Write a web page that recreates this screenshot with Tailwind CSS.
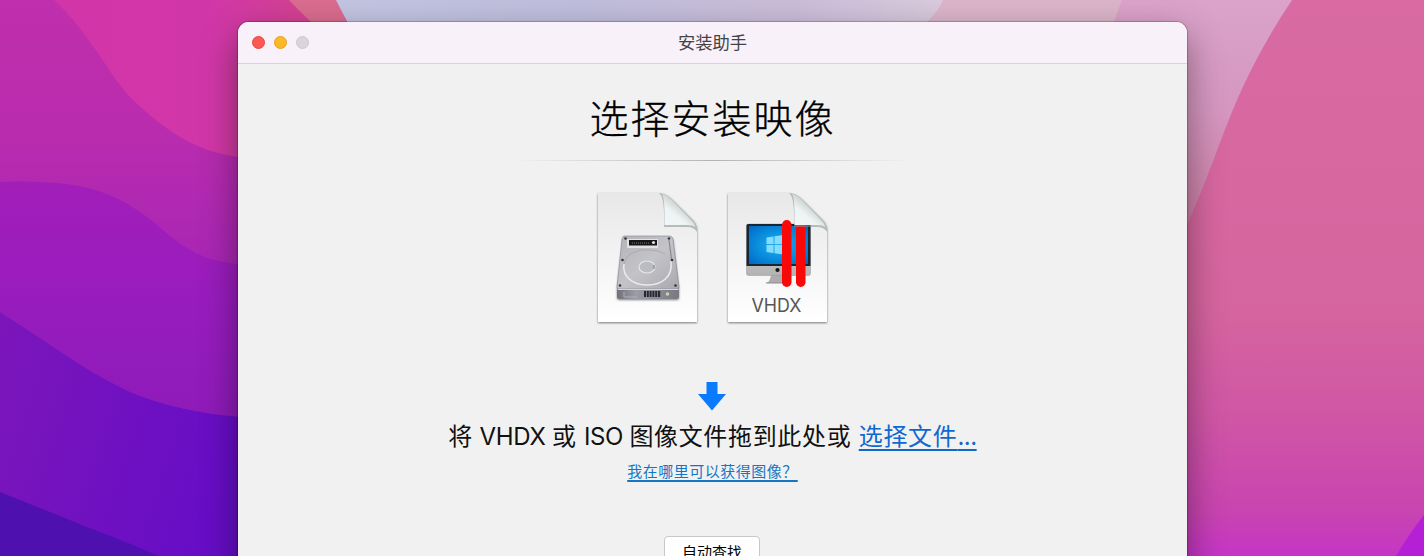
<!DOCTYPE html>
<html lang="zh-CN">
<head>
    <meta charset="UTF-8">
    <title>安装助手</title>
    <script src="https://cdn.jsdelivr.net/npm/@tailwindcss/browser@4"></script>
</head>
<body class="relative h-[556px] overflow-hidden bg-[#d4659f] font-['Inter','Noto_Sans_CJK_SC',sans-serif]">
    <!-- Wallpaper -->
    <svg class="absolute inset-0" width="1424" height="556" viewBox="0 0 1424 556">
        <defs>
            <linearGradient id="w1" gradientUnits="userSpaceOnUse" x1="0" y1="0" x2="0" y2="265"><stop offset="0" stop-color="#c02fac"/><stop offset=".5" stop-color="#b92cae"/><stop offset="1" stop-color="#a826b4"/></linearGradient>
            <linearGradient id="w2" x1="0" y1="0" x2="1" y2="0"><stop offset="0" stop-color="#d335a8"/><stop offset=".55" stop-color="#d136a9"/><stop offset="1" stop-color="#d4458c"/></linearGradient>
            <linearGradient id="w3" x1="0" y1="0" x2="0" y2="1"><stop offset="0" stop-color="#a21eb9"/><stop offset=".45" stop-color="#981cbd"/><stop offset="1" stop-color="#8b1bb8"/></linearGradient>
            <linearGradient id="w4" x1="0" y1="0" x2="1" y2=".3"><stop offset="0" stop-color="#7c16ba"/><stop offset="1" stop-color="#660dc6"/></linearGradient>
            <linearGradient id="w5" gradientUnits="userSpaceOnUse" x1="330" y1="0" x2="950" y2="0"><stop offset="0" stop-color="#c3c5e2"/><stop offset=".4" stop-color="#bfbedd"/><stop offset=".75" stop-color="#cbbdd9"/><stop offset="1" stop-color="#dacbdd"/></linearGradient>
            <linearGradient id="w6" x1="0" y1="0" x2="0" y2="1"><stop offset="0" stop-color="#dba3ca"/><stop offset=".45" stop-color="#d596bf"/><stop offset="1" stop-color="#cb799f"/></linearGradient>
            <linearGradient id="w7" x1="0" y1="0" x2="0" y2="1"><stop offset="0" stop-color="#d86ba1"/><stop offset=".55" stop-color="#d5659e"/><stop offset=".75" stop-color="#d056a5"/><stop offset=".92" stop-color="#c844b0"/><stop offset="1" stop-color="#c535c6"/></linearGradient>
        </defs>
        <rect width="420" height="556" fill="url(#w1)"/>
        <path d="M54 0C92 35 108 75 133 100C168 133 198 152 240 157L260 159V22H330V0Z" fill="url(#w2)"/>
        <path d="M289 0H338L350 30H320Q302 14 289 0Z" fill="#da6c90"/>
        <path d="M336 0H960V40H355Q347 20 336 0Z" fill="url(#w5)"/>
        <path d="M943 0H1130V40H905Q936 18 943 0Z" fill="#dcb5ca"/>
        <path d="M1122 0H1300V250H1170V40H1108Q1114 20 1122 0Z" fill="url(#w6)"/>
        <path d="M0 182C85 179 115 192 155 223C184 249 202 261 240 264L260 266V450H0Z" fill="url(#w3)"/>
        <path d="M0 312C70 357 90 374 135 394Q180 412 240 417L260 418V556H0Z" fill="url(#w4)"/>
        <path d="M0 492L92 529Q132 544 158 556H0Z" fill="#4f10b0"/>
        <path d="M1292 0C1226 99 1222 153 1180 240V556H1424V0Z" fill="url(#w7)"/>
        <path d="M1424 515Q1409 534 1396 556H1424Z" fill="#b51fd6"/>
    </svg>

    <!-- Installer window -->
    <main class="relative mx-auto mt-[22px] h-[640px] w-[949px] left-[0.5px] rounded-[11px] bg-[#f1f1f1] shadow-[0_0_1px_1px_rgba(0,0,0,0.22),0_14px_36px_rgba(0,0,0,0.42)]">
        <header class="relative flex h-[42px] items-center justify-center rounded-t-[11px] border-b border-[#d8d3da] bg-[#f8f1f9]">
            <div class="absolute left-[14px] flex gap-[9px]">
                <span class="size-[13px] rounded-full border border-[#e2463f] bg-[#fb5a50]"></span>
                <span class="size-[13px] rounded-full border border-[#e5a11d] bg-[#fbb927]"></span>
                <span class="size-[13px] rounded-full border border-[#cdc7cf] bg-[#dad4dc]"></span>
            </div>
            <h1 class="text-[17.3px] leading-[42px] text-[#454247]">安装助手</h1>
        </header>

        <section class="flex flex-col items-center text-[#111]">
            <h2 class="mt-[26px] h-[58px] whitespace-nowrap text-[39px] leading-[58px] font-light tracking-[2px] text-black [-webkit-text-stroke:0.3px_black]">选择安装映像</h2>
            <div class="mt-[12px] h-px w-[400px] bg-linear-to-r from-transparent via-[#b4b4b4] to-transparent"></div>

            <div class="mt-[27px] flex gap-[20px]">
                <!-- Disk image file -->
                <svg width="110" height="142" viewBox="0 0 110 142">
                    <defs>
                        <linearGradient id="page" x1="0" y1="0" x2="0" y2="1"><stop offset="0" stop-color="#e8e8e8"/><stop offset=".5" stop-color="#f3f3f3"/><stop offset="1" stop-color="#fff"/></linearGradient>
                        <linearGradient id="fold" x1=".1" y1="1" x2=".6" y2=".4"><stop offset="0" stop-color="#f2f8f8"/><stop offset=".6" stop-color="#eef3f3"/><stop offset="1" stop-color="#cdd2d2"/></linearGradient>
                        <linearGradient id="metal" x1="0" y1="0" x2="1" y2="1"><stop offset="0" stop-color="#b3b3b8"/><stop offset=".5" stop-color="#c3c3c8"/><stop offset="1" stop-color="#a8a8ae"/></linearGradient>
                        <linearGradient id="front" x1="0" y1="0" x2="1" y2="0"><stop offset="0" stop-color="#6f7079"/><stop offset=".3" stop-color="#9b9ca6"/><stop offset="1" stop-color="#777881"/></linearGradient>
                        <filter id="soft" x="-10%" y="-10%" width="120%" height="120%"><feDropShadow dx="0" dy="1" stdDeviation="1" flood-color="#000" flood-opacity=".5"/></filter>
                    </defs>
                    <path d="M5 5H65Q73 5 80 12L101 33Q104 36 104 43V134H5Z" fill="url(#page)" filter="url(#soft)"/>
                    <path d="M66 5Q72 9 71 39H94Q101 39 104 44Q105 37 100 32L80 12Q73 5 66 5Z" fill="#8d9191" opacity=".55"/>
                    <path d="M69 6Q72 10 71.500 37H94Q100 37 102 39Q102 36 98 32L79 12Q74 7 69 6Z" fill="url(#fold)"/>
                    <path d="M31 49H77Q79 49 80 51L86 100V109Q86 111 84 111H26Q24 111 24 109V100L30 51Z" fill="url(#front)" filter="url(#soft)"/>
                    <path d="M31 48H77Q79 48 80 51L86 99Q86 101 84 101H26Q24 101 24 99L29 51Q30 48 31 48Z" fill="url(#metal)" stroke="#91929a" stroke-width=".7"/>
                    <path d="M34 51H65V60H34Z" fill="#e2e2e4"/>
                    <path d="M36 52H64V57.500H36Z" fill="#171717"/>
                    <path d="M39 55H57" stroke="#777" stroke-dasharray="1 1"/><circle cx="60.500" cy="54.500" r="1.600" fill="#ddd"/>
                    <path d="M31 76C29 88 39 97 54 97S80 89 78 73" fill="none" stroke="#ededf0" stroke-width="1.4"/>
                    <path d="M31 76C33 66 43 61 57 62Q66 62 72 66" fill="none" stroke="#a4a5ab" stroke-width=".8"/>
                    <path d="M76 52L78.500 71" stroke="#888990" stroke-width="1.2"/>
                    <ellipse cx="54" cy="79" rx="8" ry="6" fill="#bbbcc2" stroke="#e6e6e8" stroke-width="1.2"/>
                    <path d="M61 77V81" stroke="#77777d"/>
                    <g fill="#35363a"><circle cx="32.500" cy="50.500" r="1.3"/><circle cx="76" cy="50.500" r="1.3"/><circle cx="29.500" cy="72" r="1.3"/><circle cx="79" cy="72" r="1.3"/><circle cx="27" cy="97.500" r="1.3"/><circle cx="82.500" cy="97.500" r="1.3"/></g>
                    <path d="M24.500 101.500H85.500" stroke="#d4d4dc"/>
                    <path d="M51 106H68" stroke="#282930" stroke-width="6" stroke-dasharray="2 .8"/>
                    <path d="M31 104V109H44" fill="none" stroke="#aeb0b9"/><circle cx="74.500" cy="106" r="1.8" fill="#d2cdaa"/>
                </svg>
                <!-- VHDX file -->
                <svg width="110" height="142" viewBox="0 0 110 142">
                    <defs>
                        <radialGradient id="screen" cx=".5" cy=".5" r=".7"><stop offset="0" stop-color="#2fb2f0"/><stop offset=".45" stop-color="#0c93e0"/><stop offset="1" stop-color="#0068c6"/></radialGradient>
                        <linearGradient id="chin" x1="0" y1="0" x2="0" y2="1"><stop offset="0" stop-color="#dedede"/><stop offset="1" stop-color="#b2b2b2"/></linearGradient>
                    </defs>
                    <path d="M5 5H65Q73 5 80 12L101 33Q104 36 104 43V134H5Z" fill="url(#page)" filter="url(#soft)"/>
                    <path d="M48 87H63L66 95H43Q47 94 48 87Z" fill="#adadb0"/><path d="M43 95H68" stroke="#8b8b8b"/>
                    <rect x="23.500" y="36" width="64" height="51.500" rx="2" fill="url(#chin)" stroke="#999" stroke-width=".5"/>
                    <path d="M23.500 78V37.500Q23.500 36 25 36H86Q87.500 36 87.500 37.500V78Z" fill="#1b2530"/>
                    <rect x="26" y="38" width="59" height="38" fill="url(#screen)"/>
                    <path d="M43.500 49.500L50.500 48.500V56H43.500ZM51.500 48.300L61 47V56H51.500ZM43.500 57H50.500V65L43.500 64ZM51.500 57H61V66.500L51.500 65.200Z" fill="#83ddff"/>
                    <circle cx="54.500" cy="82" r="2.100" fill="#151515"/>
                    <rect x="59" y="32" width="9.500" height="67" rx="4.700" fill="#f90808"/>
                    <rect x="73" y="32" width="9.500" height="67" rx="4.700" fill="#f90808"/>
                    <path d="M66 5Q72 9 71 39H94Q101 39 104 44Q105 37 100 32L80 12Q73 5 66 5Z" fill="#8d9191" opacity=".55"/>
                    <path d="M69 6Q72 10 71.500 37H94Q100 37 102 39Q102 36 98 32L79 12Q74 7 69 6Z" fill="url(#fold)"/>
                    <text x="28.500" y="123.500" textLength="50" lengthAdjust="spacingAndGlyphs" font-family="Inter" font-size="18.500" fill="#555">VHDX</text>
                </svg>
            </div>

            <svg class="relative -left-[0.5px] mt-[52px]" width="28" height="29" viewBox="0 0 28 29"><path d="M8.500 0H19.500V12H28L14 28.500L0 12H8.500Z" fill="#0a7aff"/></svg>

            <p class="mt-[8px] flex h-[36px] whitespace-pre text-[24px] leading-[36px] tracking-[0.66px]"><span class="[word-spacing:-1px]">将 </span><span class="tracking-[-0.3px]">VHDX </span><span>或 </span><span class="tracking-[-0.4px]">ISO </span><span>图像文件拖到此处或 </span><a href="#" class="text-[#1068cf] underline decoration-[1.5px] underline-offset-[4px]">选择文件<span class="tracking-[-0.5px]">...</span></a></p>
            <a href="#" class="mt-[5px] h-[24px] whitespace-pre text-[15px] leading-[24px] tracking-[0.5px] text-[#1477c5] underline decoration-[1.5px] underline-offset-[3px]">我在哪里可以获得图像？</a>
            <button class="relative -left-[0.5px] mt-[52px] h-[34px] w-[96px] rounded-[4px] border border-[#c8c8c8] bg-white text-[15px] leading-[32px] text-black">自动查找</button>
        </section>
    </main>
</body>
</html>
